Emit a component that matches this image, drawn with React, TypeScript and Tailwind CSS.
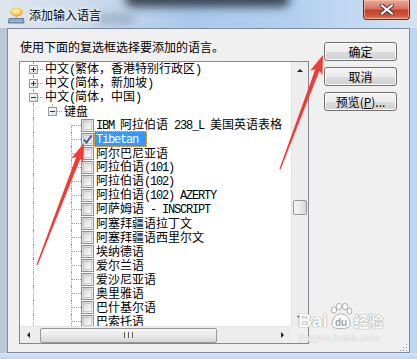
import clsx from "clsx";

interface TreeItem {
    level: number;
    kind: "plus" | "minus" | "leaf";
    text: string;
    checked?: boolean;
    selected?: boolean;
    first?: boolean;
}

const items: TreeItem[] = [
    { level: 0, kind: "plus", text: "中文(繁体，香港特别行政区)" },
    { level: 0, kind: "plus", text: "中文(简体，新加坡)" },
    { level: 0, kind: "minus", text: "中文(简体，中国)" },
    { level: 1, kind: "minus", text: "键盘" },
    { level: 2, kind: "leaf", text: "IBM 阿拉伯语 238_L 美国英语表格", first: true },
    { level: 2, kind: "leaf", text: "Tibetan", checked: true, selected: true },
    { level: 2, kind: "leaf", text: "阿尔巴尼亚语" },
    { level: 2, kind: "leaf", text: "阿拉伯语(101)" },
    { level: 2, kind: "leaf", text: "阿拉伯语(102)" },
    { level: 2, kind: "leaf", text: "阿拉伯语(102) AZERTY" },
    { level: 2, kind: "leaf", text: "阿萨姆语 - INSCRIPT" },
    { level: 2, kind: "leaf", text: "阿塞拜疆语拉丁文" },
    { level: 2, kind: "leaf", text: "阿塞拜疆语西里尔文" },
    { level: 2, kind: "leaf", text: "埃纳德语" },
    { level: 2, kind: "leaf", text: "爱尔兰语" },
    { level: 2, kind: "leaf", text: "爱沙尼亚语" },
    { level: 2, kind: "leaf", text: "奥里雅语" },
    { level: 2, kind: "leaf", text: "巴什基尔语" },
    { level: 2, kind: "leaf", text: "巴索托语" },
];

// latin runs use a mono face squeezed to 6px per char, like SimSun
const MixedText = ({ text }: { text: string }) => {
    const parts = text.split(/([\x20-\x7e]+)/).filter(Boolean);
    return (
        <>
            {parts.map((p, i) =>
                /^[\x20-\x7e]+$/.test(p) ? (
                    <span key={i} className="whitespace-pre font-['Liberation_Mono'] tracking-[-1.2px]">
                        {p}
                    </span>
                ) : (
                    <span key={i}>{p}</span>
                )
            )}
        </>
    );
};

const VLine = ({ part }: { part: "full" | "top" | "bottom" }) => (
    <div
        className={clsx(
            "absolute left-[9px] w-0 border-l border-dotted border-[#9a9a9a]",
            part === "full" && "top-0 bottom-0",
            part === "top" && "top-0 h-[7px]",
            part === "bottom" && "top-[7px] bottom-0"
        )}
    />
);

const HLine = () => (
    <div className="absolute top-[7px] left-[10px] right-0 h-0 border-t border-dotted border-[#9a9a9a]" />
);

const Expander = ({ open }: { open: boolean }) => (
    <div className="absolute left-[5px] top-[3px] w-[9px] h-[9px] border border-[#8f9aa8] bg-[linear-gradient(135deg,#ffffff,#d9dde2)]">
        <div className="absolute left-[1px] top-[3px] w-[5px] h-[1px] bg-[#1c3a60]" />
        {!open && <div className="absolute left-[3px] top-[1px] w-[1px] h-[5px] bg-[#1c3a60]" />}
    </div>
);

const CheckBox = ({ checked }: { checked?: boolean }) => (
    <div className="relative w-[13px] h-[13px] shrink-0 self-center border border-[#8e8f8f] bg-[linear-gradient(135deg,#d0d0d0,#f8f8f8)]">
        <div className="absolute inset-[1px] border border-[#c9c9c9] bg-[linear-gradient(135deg,#dadada,#fbfbfb)]" />
        {checked && (
            <svg className="absolute left-0 top-0" width="11" height="11" viewBox="0 0 11 11">
                <path d="M2 5.5 L4.5 8.5 L9.5 1.5" fill="none" stroke="#3e4f8f" strokeWidth="1.8" />
            </svg>
        )}
    </div>
);

const TreeRow = ({ item }: { item: TreeItem }) => {
    const cells = [];
    for (let i = 0; i < item.level; i++) {
        cells.push(
            <div key={i} className="relative w-[19px] shrink-0">
                {i === 0 && <VLine part="full" />}
            </div>
        );
    }
    return (
        <div className="flex h-[14px] shrink-0 items-stretch">
            {cells}
            <div className="relative w-[19px] shrink-0">
                {item.kind === "leaf" ? (
                    <VLine part={item.first ? "bottom" : "full"} />
                ) : (
                    <VLine part={item.level === 0 ? "full" : "top"} />
                )}
                <HLine />
                {item.kind !== "leaf" && <Expander open={item.kind === "minus"} />}
            </div>
            {item.kind === "leaf" && <CheckBox checked={item.checked} />}
            <span
                className={clsx(
                    "self-center whitespace-nowrap leading-[12px]",
                    item.kind === "leaf" ? "ml-0 pl-[1px]" : "ml-[1px]",
                    item.selected
                        ? "bg-[#3399ff] text-white pr-[8px] border border-dotted border-[#f2b95c]"
                        : "border border-transparent"
                )}
            >
                <MixedText text={item.text} />
            </span>
        </div>
    );
};

const Arrow = ({ dir }: { dir: "up" | "down" | "left" | "right" }) => {
    const pts = {
        up: "0,3 3,0 6,3",
        down: "0,0 6,0 3,3",
        left: "3,0 3,6 0,3",
        right: "0,0 0,6 3,3",
    }[dir];
    const vertical = dir === "up" || dir === "down";
    return (
        <svg width={vertical ? 6 : 3} height={vertical ? 3 : 6} viewBox={vertical ? "0 0 6 3" : "0 0 3 6"}>
            <polygon points={pts} fill="#222" />
        </svg>
    );
};

const DialogButton = ({ children }: { children: React.ReactNode }) => (
    <button className="flex h-[19px] w-[73px] items-center justify-center rounded-[3px] border border-[#707070] bg-[linear-gradient(180deg,#f4f4f4_0%,#ebebeb_50%,#dddddd_51%,#cfcfcf_100%)] text-[12px] leading-none text-black shadow-[inset_0_0_0_1px_#fbfbfb]">
        {children}
    </button>
);

const TitleIcon = () => (
    <svg width="17" height="17" viewBox="0 0 17 17">
        <defs>
            <radialGradient id="bulb" cx="0.45" cy="0.4" r="0.6">
                <stop offset="0" stopColor="#fff6c8" />
                <stop offset="0.6" stopColor="#f7d35a" />
                <stop offset="1" stopColor="#e0a52a" />
            </radialGradient>
        </defs>
        <ellipse cx="8.5" cy="5" rx="6.5" ry="4.2" fill="url(#bulb)" />
        <path d="M6 8.5 L8.5 11 L10 8.5 Z" fill="#e7b33c" />
        <path d="M1 11.5 L15.5 11.5 L16 16 L0.5 16 Z" fill="#7f9cc0" stroke="#4f6e96" strokeWidth="0.8" />
        <path d="M2 13 H14.5 M2 14.6 H14.8" stroke="#d6e2f0" strokeWidth="0.7" strokeDasharray="1.2 0.8" />
    </svg>
);

const CloseButton = () => (
    <div className="mr-[7px] ml-auto flex h-[20px] w-[47px] items-center justify-center rounded-b-[4px] border border-t-0 border-[#5b2b22] bg-[linear-gradient(180deg,#e9a996_0%,#d9755f_45%,#c3402a_55%,#cf5a3e_85%,#e08a66_100%)] shadow-[inset_0_0_0_1px_rgba(255,210,190,0.55)]">
        <svg width="14" height="11" viewBox="0 0 14 11">
            <path d="M2 1.5 L12 9.5 M12 1.5 L2 9.5" stroke="#3d2a2a" strokeWidth="4" strokeLinecap="square" />
            <path d="M2 1.5 L12 9.5 M12 1.5 L2 9.5" stroke="#ffffff" strokeWidth="2.2" strokeLinecap="square" />
        </svg>
    </div>
);

const Watermark = () => (
    <div className="pointer-events-none absolute left-[298px] top-[303px] flex flex-col items-start text-white">
        <div className="flex items-end gap-[1px]">
            <span className="font-['Liberation_Sans'] text-[19px] leading-[20px] font-bold [text-shadow:0_0_1px_#8c8c8c,0_0_1px_#8c8c8c]">
                Bai
            </span>
            <svg width="24" height="28" viewBox="0 0 24 28">
                <g fill="#ffffff" stroke="#9a9a9a" strokeWidth="0.8">
                    <ellipse cx="5" cy="7" rx="2.6" ry="3.2" />
                    <ellipse cx="10" cy="3.6" rx="2.6" ry="3.2" />
                    <ellipse cx="16" cy="3.6" rx="2.6" ry="3.2" />
                    <ellipse cx="20.5" cy="8" rx="2.4" ry="3" />
                    <path d="M3 22 C3 14 8 11 12 11 C17 11 21 15 21 22 C21 27 3 27 3 22 Z" />
                </g>
                <text x="12" y="23" textAnchor="middle" fontFamily="Liberation Sans" fontWeight="bold" fontSize="10" fill="#a0a0a0">
                    du
                </text>
            </svg>
            <span className="text-[15px] leading-[20px] font-bold [text-shadow:0_0_1px_#8c8c8c,0_0_1px_#8c8c8c]">
                经验
            </span>
        </div>
        <span className="mt-[1px] font-['Liberation_Serif'] text-[11px] leading-[11px] [text-shadow:0_0_1px_#9a9a9a]">
            jingyan.baidu.com
        </span>
    </div>
);

const RedArrows = () => (
    <svg className="pointer-events-none absolute left-0 top-0" width="417" height="359" viewBox="0 0 417 359">
        <polygon
            points="36.4,264.8 76.2,157.1 71.1,158.4 84,143 83.2,163 80.3,158.7 37.6,265.2"
            fill="#f23b36"
        />
        <polygon
            points="279.4,168.8 315.3,69.2 310.2,70.5 323,55 322.4,75.1 319.4,70.7 280.6,169.2"
            fill="#f23b36"
        />
    </svg>
);

const App = () => {
    return (
        <div className="relative flex h-[359px] w-[417px] flex-col overflow-hidden bg-[linear-gradient(90deg,#b9c7d6_0%,#c3d3e4_20%,#c6d9ee_70%,#bcd6f3_100%)] font-['Noto_Sans_CJK_SC',sans-serif] text-black">
            {/* title bar */}
            <div className="relative flex h-[28px] shrink-0 items-start bg-[linear-gradient(90deg,#dfe6ee_0%,#cbdaea_22%,#a9c9eb_45%,#b2cfee_70%,#d4e3f4_100%)]">
                <div className="pointer-events-none absolute left-[125px] top-[-9px] h-[16px] w-[165px] rounded-full bg-[#1c2430]/80 blur-[5px]" />
                <div className="pointer-events-none absolute left-[95px] top-[14px] h-[10px] w-[40px] rounded-full bg-[#6b7a8c]/40 blur-[4px]" />
                <div className="relative ml-[8px] mt-[7px]">
                    <TitleIcon />
                </div>
                <span className="relative ml-[4px] mt-[7px] text-[12px] leading-[16px] [text-shadow:0_0_6px_#ffffff,0_0_3px_#ffffff]">
                    添加输入语言
                </span>
                <CloseButton />
            </div>

            {/* client area */}
            <div className="mx-[7px] flex h-[325px] shrink-0 items-start border border-[#7d8da0] bg-[#f0f0f0] pl-[11px]">
                <div className="flex flex-col pt-[11px]">
                    <div className="ml-[1px] h-[14px] text-[12px] leading-[14px]">使用下面的复选框选择要添加的语言。</div>
                    <div className="mt-[7px] grid h-[283px] w-[290px] grid-cols-[271px_17px] grid-rows-[264px_17px] border border-[#828790] bg-white">
                        <div className="flex flex-col overflow-hidden pl-[4px] text-[12px]">
                            {items.map((item, i) => (
                                <TreeRow key={i} item={item} />
                            ))}
                        </div>
                        {/* vertical scrollbar */}
                        <div className="flex flex-col border-l border-[#e3e3e3] bg-[#ededed]">
                            <div className="flex h-[17px] items-center justify-center">
                                <Arrow dir="up" />
                            </div>
                            <div className="flex-1">
                                <div className="ml-[1px] mt-[121px] h-[15px] w-[14px] rounded-[2px] border border-[#979797] bg-[linear-gradient(90deg,#f6f6f6_0%,#e9e9e9_50%,#d6d6d6_100%)]" />
                            </div>
                            <div className="flex h-[17px] items-center justify-center">
                                <Arrow dir="down" />
                            </div>
                        </div>
                        {/* horizontal scrollbar */}
                        <div className="flex items-center border-t border-[#e3e3e3] bg-[#ededed]">
                            <div className="flex h-[17px] w-[17px] items-center justify-center">
                                <Arrow dir="left" />
                            </div>
                            <div className="flex flex-1 items-center">
                                <div className="ml-[3px] flex h-[15px] w-[177px] items-center justify-center gap-[1px] rounded-[2px] border border-[#979797] bg-[linear-gradient(180deg,#f6f6f6_0%,#e9e9e9_50%,#d6d6d6_100%)]">
                                    <div className="h-[6px] w-[1px] bg-[#5e5e5e]" />
                                    <div className="h-[6px] w-[1px] bg-[#f8f8f8]" />
                                    <div className="h-[6px] w-[1px] bg-[#5e5e5e]" />
                                    <div className="h-[6px] w-[1px] bg-[#f8f8f8]" />
                                    <div className="h-[6px] w-[1px] bg-[#5e5e5e]" />
                                </div>
                            </div>
                            <div className="flex h-[17px] w-[17px] items-center justify-center">
                                <Arrow dir="right" />
                            </div>
                        </div>
                        <div className="bg-[#f0f0f0]" />
                    </div>
                </div>
                <div className="ml-[15px] flex flex-col gap-[6px] pt-[13px]">
                    <DialogButton>确定</DialogButton>
                    <DialogButton>取消</DialogButton>
                    <DialogButton>
                        预览(<span className="underline">P</span>)...
                    </DialogButton>
                </div>
            </div>

            {/* bottom frame */}
            <div className="flex-1 bg-[linear-gradient(180deg,#d7e6f5,#bcd6f2)]" />

            {/* resize grip */}
            <svg className="pointer-events-none absolute left-[399px] top-[343px]" width="9" height="9" viewBox="0 0 9 9">
                <g fill="#9a9a9a">
                    <rect x="7" y="1" width="1" height="1" />
                    <rect x="4" y="4" width="1" height="1" />
                    <rect x="7" y="4" width="1" height="1" />
                    <rect x="1" y="7" width="1" height="1" />
                    <rect x="4" y="7" width="1" height="1" />
                    <rect x="7" y="7" width="1" height="1" />
                </g>
            </svg>

            <Watermark />
            <RedArrows />
        </div>
    );
};

export default App;
